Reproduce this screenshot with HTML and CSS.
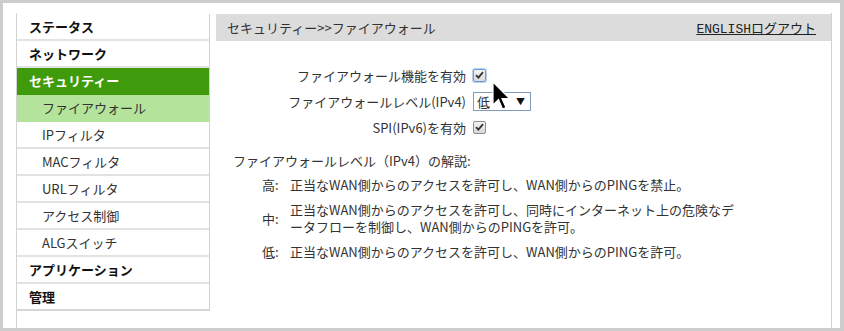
FILE: index.html
```html
<!DOCTYPE html>
<html lang="ja">
<head>
    <meta charset="UTF-8">
    <title>ファイアウォール</title>
    <link rel="stylesheet" href="styles.css">
</head>
<body>
    <div class="frame">
        <div class="side">
            <ul class="menu">
                <li class="top">ステータス</li>
                <li class="top">ネットワーク</li>
                <li class="top active">セキュリティー</li>
                <li class="sub current">ファイアウォール</li>
                <li class="sub">IPフィルタ</li>
                <li class="sub">MACフィルタ</li>
                <li class="sub">URLフィルタ</li>
                <li class="sub">アクセス制御</li>
                <li class="sub">ALGスイッチ</li>
                <li class="top">アプリケーション</li>
                <li class="top">管理</li>
            </ul>
        </div>

        <div class="main">
            <div class="title-bar">
                <span>セキュリティー&gt;&gt;ファイアウォール</span>
                <span class="links"><a href="#" class="en">ENGLISH</a><a href="#">ログアウト</a></span>
            </div>

            <div class="form">
                <label>ファイアウォール機能を有効</label>
                <span class="check focus">
                    <svg width="9" height="8" viewBox="0 0 9 8"><path d="M1 4.2 L3.4 6.6 L8 1.2" fill="none" stroke="#333" stroke-width="1.8"/></svg>
                </span>
                <label>ファイアウォールレベル(IPv4)</label>
                <span class="select"><span>低</span><span class="arrow">▼</span></span>
                <label>SPI(IPv6)を有効</label>
                <span class="check">
                    <svg width="9" height="8" viewBox="0 0 9 8"><path d="M1 4.2 L3.4 6.6 L8 1.2" fill="none" stroke="#333" stroke-width="1.8"/></svg>
                </span>
            </div>

            <div class="desc">
                <p class="desc-title">ファイアウォールレベル（IPv4）の解説:</p>
                <ul class="levels">
                    <li><span class="lv">高:</span><span>正当なWAN側からのアクセスを許可し、WAN側からのPINGを禁止。</span></li>
                    <li><span class="lv">中:</span><span>正当なWAN側からのアクセスを許可し、同時にインターネット上の危険なデータフローを制御し、WAN側からのPINGを許可。</span></li>
                    <li><span class="lv">低:</span><span>正当なWAN側からのアクセスを許可し、WAN側からのPINGを許可。</span></li>
                </ul>
            </div>
        </div>

        <!-- mouse pointer over the first checkbox -->
        <svg class="cursor" width="19" height="30" viewBox="0 0 19 30">
            <path d="M1 1 L1 24 L6.5 18.5 L10.5 28 L14 26.5 L10 17.5 L17.5 17.5 Z" fill="#000" stroke="#fff" stroke-width="1.2"/>
        </svg>
    </div>
</body>
</html>
```

FILE: styles.css
```css
body {
    margin: 0;
    font-family: "Noto Sans CJK JP", sans-serif;
    font-size: 13px;
    color: #333;
}
.frame {
    position: relative;
    width: 844px;
    height: 331px;
    box-sizing: border-box;
    border: 3px solid #cdcdcd;
    border-right-width: 4px;
    background-color: #fff;
    display: flex;
    gap: 6px;
    padding: 10px 0 0 13px;
}
.side {
    width: 193px;
    border-left: 1px solid #d2d2d2;
}
.menu {
    list-style: none;
    margin: 0;
    padding: 0;
    border-right: 1px solid #d2d2d2;
    border-bottom: 2px solid #d6d6d6;
}
.menu li {
    height: 25px;
    line-height: 25px;
    border-bottom: 2px solid #e2e2e2;
    padding-left: 12px;
    white-space: nowrap;
}
.menu li:first-child {
    margin-top: 1px;
}
.menu li:last-child {
    border-bottom: none;
}
.menu .top {
    font-weight: bold;
    color: #111;
}
.menu .sub {
    padding-left: 25px;
    color: #333;
}
.menu .active {
    background-color: #3f9b0b;
    color: #fff;
    border-bottom-color: #3f9b0b;
}
.menu .current {
    background-color: #b4e39c;
    border-bottom-color: #b4e39c;
}
.main {
    width: 615px;
    border-right: 1px solid #d2d2d2;
}
.title-bar {
    background-color: #dcdcdc;
    height: 27px;
    margin-top: 1px;
    display: flex;
    justify-content: space-between;
    align-items: center;
    padding: 0 15px 0 11px;
}
.links a {
    color: #222;
    text-decoration: underline;
}
.links .en {
    font-family: "Liberation Mono", monospace;
}
.form {
    display: grid;
    grid-template-columns: 250px auto;
    grid-auto-rows: 26px;
    column-gap: 7px;
    align-items: center;
    justify-items: start;
    margin-top: 21px;
}
.form label {
    justify-self: end;
}
.check {
    width: 11px;
    height: 11px;
    border: 1px solid #8e8e8e;
    border-radius: 2px;
    background: linear-gradient(#f4f4f4, #d8d8d8);
    display: flex;
    align-items: center;
    justify-content: center;
}
.check.focus {
    border-color: #6f9ad6;
    box-shadow: 0 0 0 1px #b9d0ee;
}
.select {
    width: 48px;
    height: 17px;
    border: 1px solid #7f9db9;
    display: flex;
    justify-content: space-between;
    align-items: center;
    padding: 0 5px 0 3px;
    font-size: 13px;
}
.select .arrow {
    font-size: 9px;
    color: #111;
}
.desc {
    margin-top: 12px;
    padding-left: 17px;
}
.desc-title {
    margin: 0 0 7px;
    line-height: 17px;
}
.levels {
    list-style: none;
    margin: 0;
    padding: 0 0 0 29px;
}
.levels li {
    display: flex;
    align-items: center;
    line-height: 17px;
    margin-bottom: 8px;
}
.levels .lv {
    width: 28px;
    flex: none;
}
.levels li span:last-child {
    width: 447px;
    line-break: loose;
}
.cursor {
    position: absolute;
    left: 489px;
    top: 78px;
}
```
